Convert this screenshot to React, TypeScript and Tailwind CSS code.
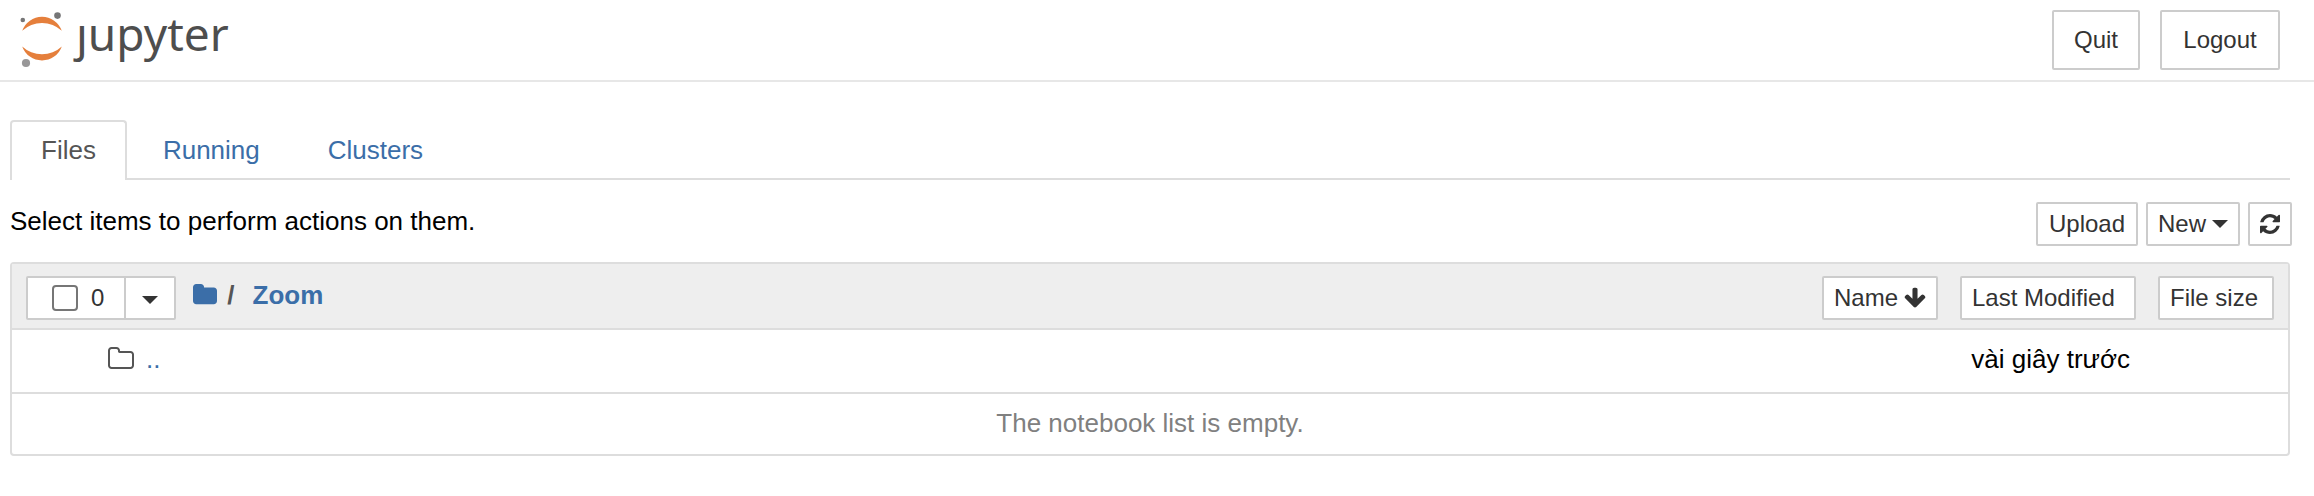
import React from "react";

const link = "text-[#3b6ea8]";
const smallButton =
  "inline-flex h-11 items-center gap-[6px] rounded-xs border-2 border-[#ccc] bg-white text-2xl leading-9 font-normal text-[#333]";
const headerButton = "h-[60px] rounded-xs border-2 border-[#ccc] bg-white text-center text-2xl text-[#333]";

function Glyph({ d, box, className }: { d: string; box: string; className: string }) {
  return (
    <svg viewBox={box} className={className} fill="currentColor" aria-hidden="true">
      <path d={d} />
    </svg>
  );
}

const REFRESH =
  "M1511 1056q0 5-1 7-64 268-268 434.5t-478 166.5q-146 0-282.5-55t-243.5-157l-129 129q-19 19-45 19t-45-19-19-45v-448q0-26 19-45t45-19h448q26 0 45 19t19 45-19 45l-137 137q71 66 161 102t187 36q134 0 250-65t186-179q11-17 53-117 8-23 30-23h192q13 0 22.5 9.5t9.5 22.5zm25-800v448q0 26-19 45t-45 19h-448q-26 0-45-19t-19-45 19-45l138-138q-148-137-349-137-134 0-250 65t-186 179q-11 17-53 117-8 23-30 23h-199q-13 0-22.5-9.5t-9.5-22.5v-7q65-268 270-434.5t480-166.5q146 0 284 55.5t245 156.5l130-129q19-19 45-19t45 19 19 45z";
const FOLDER =
  "M1664 608v704q0 92-66 158t-158 66h-1216q-92 0-158-66t-66-158v-960q0-92 66-158t158-66h320q92 0 158 66t66 158v32h672q92 0 158 66t66 158z";
const FOLDER_OUTLINE =
  "M1536 1312v-704q0-40-28-68t-68-28h-704q-40 0-68-28t-28-68v-64q0-40-28-68t-68-28h-320q-40 0-68 28t-28 68v960q0 40 28 68t68 28h1216q40 0 68-28t28-68zm128-704v704q0 92-66 158t-158 66h-1216q-92 0-158-66t-66-158v-960q0-92 66-158t158-66h320q92 0 158 66t66 158v32h672q92 0 158 66t66 158z";
const ARROW_DOWN =
  "M1611 832q0 53-37 90l-651 652q-39 37-91 37-53 0-90-37l-651-652q-38-36-38-90 0-53 38-91l74-75q39-37 91-37 53 0 90 37l294 294v-704q0-52 38-90t90-38h128q52 0 90 38t38 90v704l294-294q37-37 90-37 52 0 91 37l75 75q37 39 37 91z";

function Caret() {
  return <Glyph box="0 0 16 8" d="M0 0h16l-8 8z" className="h-2 w-4" />;
}

function Logo() {
  return (
    <a href="#home" aria-label="jupyter" className="flex items-start gap-2 text-[#4e4e4e]">
      <svg viewBox="0 0 50 60" className="mt-2 h-[60px] w-[50px]" aria-hidden="true">
        <path d="M4.2 22.8A21 21 0 0 1 43.8 22.8A29 29 0 0 0 4.2 22.8z" fill="#e57f3c" />
        <path d="M4.2 38.4A21 21 0 0 0 43.8 38.4A29 29 0 0 1 4.2 38.4z" fill="#e57f3c" />
        <circle cx="4.8" cy="12" r="2.3" fill="#767677" />
        <circle cx="39.5" cy="7.6" r="3.3" fill="#767677" />
        <circle cx="8" cy="55" r="4.1" fill="#989798" />
      </svg>
      <span className="font-['Noto_Sans',sans-serif] text-[46px] leading-[66px]">ȷupyter</span>
    </a>
  );
}

export default function App() {
  return (
    <div className="bg-white font-['Liberation_Sans',Arial,sans-serif] text-[26px] leading-9 text-black">
      <header className="flex h-[82px] items-start justify-between border-b-2 border-[#e7e7e7] pr-[34px] pl-[18px]">
        <Logo />
        <div className="flex gap-5 pt-[10px]">
          <button className={`${headerButton} w-[88px]`}>Quit</button>
          <button className={`${headerButton} w-[120px]`}>Logout</button>
        </div>
      </header>

      <main className="pt-[38px] pr-6 pl-[10px]">
        <nav className="flex h-[60px] gap-1 border-b-2 border-[#ddd]">
          <a href="#files" aria-current="page" className="-mb-[2px] rounded-t-sm border-2 border-b-0 border-[#ddd] bg-white px-[29px] pt-[10px] text-[#555]">
            Files
          </a>
          <a href="#running" className={`px-8 pt-3 ${link}`}>
            Running
          </a>
          <a href="#clusters" className={`px-8 pt-3 ${link}`}>
            Clusters
          </a>
        </nav>

        <div className="-mr-[2px] flex items-start justify-between pt-[22px] pb-4">
          <p className="pt-px">Select items to perform actions on them.</p>
          <div className="flex gap-2">
            <button className={`${smallButton} w-[102px] justify-center`}>Upload</button>
            <button className={`${smallButton} w-[94px] justify-center`}>
              New
              <Caret />
            </button>
            <button aria-label="Refresh" className={`${smallButton} w-11 justify-center`}>
              <Glyph box="0 0 1536 1792" d={REFRESH} className="h-6 w-5" />
            </button>
          </div>
        </div>

        <div className="rounded-sm border-2 border-[#ddd]">
          <table className="w-full border-collapse">
            <thead>
              <tr className="border-b-2 border-[#ddd] bg-[#eee] text-left align-top">
                <th className="pt-3 pb-2 pl-[14px] font-bold">
                  <div className="flex">
                    <div className="flex h-11 rounded-xs border-2 border-[#ccc] bg-white text-2xl leading-9 font-normal text-[#333]">
                      <label className="flex items-center gap-[13px] pr-5 pl-6">
                        <input
                          type="checkbox"
                          aria-label="Select all"
                          className="size-[26px] appearance-none rounded-sm border-2 border-[#767676] bg-white"
                        />
                        <span>0</span>
                      </label>
                      <button aria-label="Select by type" className="flex items-center border-l-2 border-[#ccc] px-4 pt-1">
                        <Caret />
                      </button>
                    </div>
                    <div className="flex h-[38px] items-center pl-[17px]">
                      <a href="#root" aria-label="Home folder" className={link}>
                        <Glyph box="0 0 1664 1792" d={FOLDER} className="h-[26px] w-6" />
                      </a>
                      <span className="pl-[10px] text-[#555]">/</span>
                      <a href="#zoom" className={`pl-[18px] ${link}`}>
                        Zoom
                      </a>
                    </div>
                  </div>
                </th>
                <th className="w-[138px] pt-3 pb-2">
                  <button className={`${smallButton} w-[116px] px-[10px]`}>
                    Name
                    <Glyph box="0 0 1664 1792" d={ARROW_DOWN} className="h-6 w-[22px] shrink-0" />
                  </button>
                </th>
                <th className="w-[198px] pt-3 pb-2">
                  <button className={`${smallButton} w-44 px-[10px]`}>Last Modified</button>
                </th>
                <th className="w-[130px] pt-3 pb-2">
                  <button className={`${smallButton} w-[116px] px-[10px]`}>File size</button>
                </th>
              </tr>
            </thead>
            <tbody>
              <tr className="border-b-2 border-[#ddd]">
                <td className="pt-[11px] pb-[15px] pl-24">
                  <a href="#parent" className="flex items-center gap-3">
                    <Glyph box="0 0 1664 1792" d={FOLDER_OUTLINE} className="h-7 w-[26px] text-[#555]" />
                    <span className={link}>..</span>
                  </a>
                </td>
                <td />
                <td className="pt-[11px] pr-7 pb-[15px] text-right whitespace-nowrap">vài giây trước</td>
                <td />
              </tr>
              <tr>
                <td colSpan={4} className="pt-[11px] pb-[13px] text-center text-[#808080]">
                  The notebook list is empty.
                </td>
              </tr>
            </tbody>
          </table>
        </div>
      </main>
    </div>
  );
}
